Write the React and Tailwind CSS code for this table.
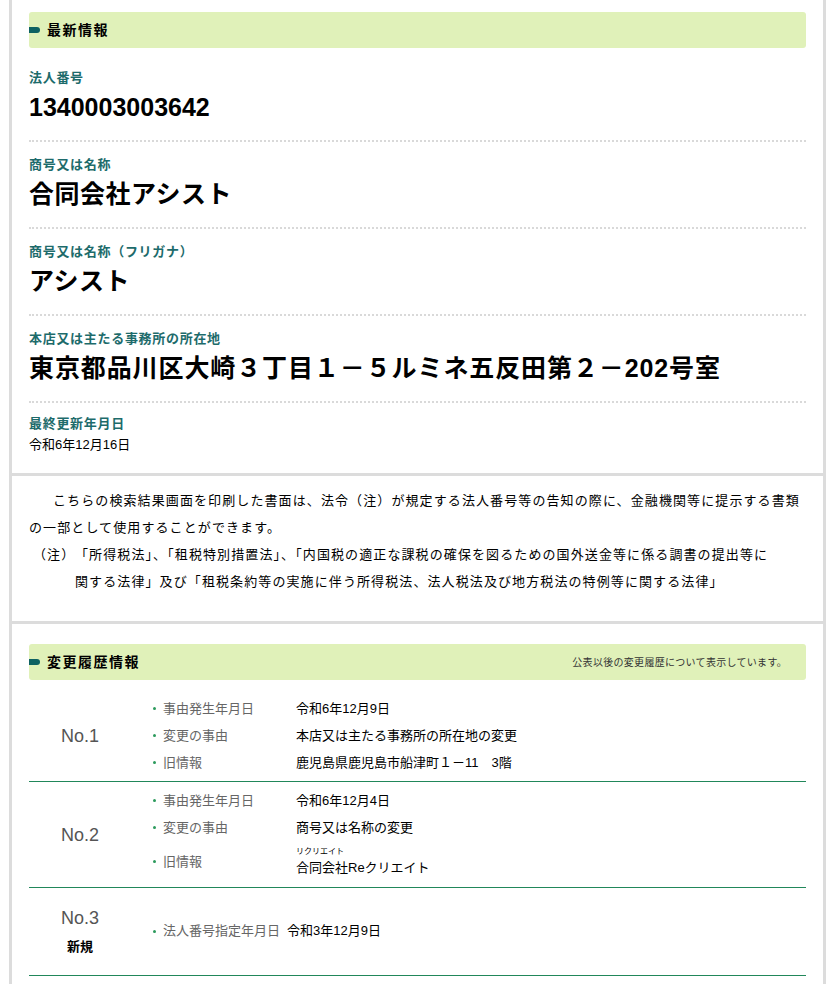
export default function App() {
  const rows = [
    { label: "法人番号", value: "1340003003642", track: "tracking-[0px]" },
    { label: "商号又は名称", value: "合同会社アシスト", track: "tracking-[0.5px]" },
    { label: "商号又は名称（フリガナ）", value: "アシスト", track: "tracking-[0.5px]" },
    { label: "本店又は主たる事務所の所在地", value: "東京都品川区大崎３丁目１－５ルミネ五反田第２－202号室", track: "tracking-[0.9px]" },
  ];

  return (
    <div className="min-h-screen bg-white font-['Liberation_Sans','Noto_Sans_CJK_JP',sans-serif] text-black">
      <div className="mx-[9px] border-x-[3px] border-[#dcdcdc]">
        {/* 最新情報 */}
        <section className="px-[17px] pt-[12px] pb-[19px] border-b-[3px] border-[#dcdcdc]">
          <SectionBar title="最新情報" />
          {rows.map((r, i) => (
            <div
              key={r.label}
              className={`border-b-2 border-dotted border-[#d9d9d9] pb-[17px] ${i === 0 ? "pt-[21px]" : "pt-[14px]"}`}
            >
              <p className="text-[13px] leading-[18px] font-bold tracking-[0.7px] text-[#1d6b6b] mb-[4px]">{r.label}</p>
              <p className={`text-[25px] leading-[32px] font-bold ${r.track}`}>{r.value}</p>
            </div>
          ))}
          <div className="pt-[12px]">
            <p className="text-[13px] leading-[18px] font-bold tracking-[0.7px] text-[#1d6b6b] mb-[3px]">最終更新年月日</p>
            <p className="text-[13px] leading-[18px]">令和6年12月16日</p>
          </div>
        </section>

        {/* 注意書き */}
        <section className="px-[17px] pt-[11px] pb-[26px] border-b-[3px] border-[#dcdcdc] text-[13px] leading-[27px] tracking-[1.1px] whitespace-nowrap">
          <p>
            <span className="inline-block w-[24px]" />
            こちらの検索結果画面を印刷した書面は、法令（注）が規定する法人番号等の告知の際に、金融機関等に提示する書類
            <br />
            の一部として使用することができます。
          </p>
          <div className="flex pl-[4px]">
            <span className="shrink-0 w-[42px]">（注）</span>
            <p>
              「所得税法」、「租税特別措置法」、「内国税の適正な課税の確保を図るための国外送金等に係る調書の提出等に
              <br />
              関する法律」及び「租税条約等の実施に伴う所得税法、法人税法及び地方税法の特例等に関する法律」
            </p>
          </div>
        </section>

        {/* 変更履歴情報 */}
        <section className="px-[17px] pt-[20px] pb-[40px]">
          <SectionBar title="変更履歴情報" note="公表以後の変更履歴について表示しています。" />
          <div className="mt-[10px]">
            <HistoryRow no="No.1" className="py-[5px]">
              <Item label="事由発生年月日">令和6年12月9日</Item>
              <Item label="変更の事由">本店又は主たる事務所の所在地の変更</Item>
              <Item label="旧情報">鹿児島県鹿児島市船津町１－11　3階</Item>
            </HistoryRow>
            <HistoryRow no="No.2" className="py-[5px]">
              <Item label="事由発生年月日">令和6年12月4日</Item>
              <Item label="変更の事由">商号又は名称の変更</Item>
              <Item label="旧情報" tall>
                <span className="block text-[8px] leading-[13px]">リクリエイト</span>
                <span className="block leading-[20px]">合同会社Reクリエイト</span>
              </Item>
            </HistoryRow>
            <HistoryRow no="No.3" sub="新規" className="pt-[18px] pb-[19px]">
              <Item label="法人番号指定年月日" w="w-[124px]">令和3年12月9日</Item>
            </HistoryRow>
          </div>
        </section>
      </div>
    </div>
  );
}

function SectionBar({ title, note }) {
  return (
    <div className="flex items-center justify-between h-[36px] bg-[#e0f1b9] rounded-[3px]">
      <div className="flex items-center">
        <span className="w-[11px] h-[6px] bg-[#0e6262] rounded-r-full" />
        <h2 className="ml-[7px] text-[14px] font-bold tracking-[1.5px]">{title}</h2>
      </div>
      {note && <span className="pr-[19px] text-[10px] tracking-[0.3px] text-[#333]">{note}</span>}
    </div>
  );
}

function HistoryRow({ no, sub, className, children }) {
  return (
    <div className={`flex items-center border-b border-[#21875a] ${className}`}>
      <div className="w-[102px] shrink-0 text-center">
        <p className="text-[18px] leading-[24px] text-[#555]">{no}</p>
        {sub && <p className="mt-[8px] text-[13px] leading-[18px] font-bold">{sub}</p>}
      </div>
      <div className="pl-[22px]">{children}</div>
    </div>
  );
}

function Item({ label, children, tall, w = "w-[133px]" }) {
  return (
    <div className={`flex items-center text-[13px] ${tall ? "py-[4px]" : "h-[27px]"}`}>
      <span className="w-[3px] h-[3px] rounded-full bg-[#2b9a5c] mr-[7px] shrink-0" />
      <span className={`${w} shrink-0 text-[#666]`}>{label}</span>
      <div>{children}</div>
    </div>
  );
}
